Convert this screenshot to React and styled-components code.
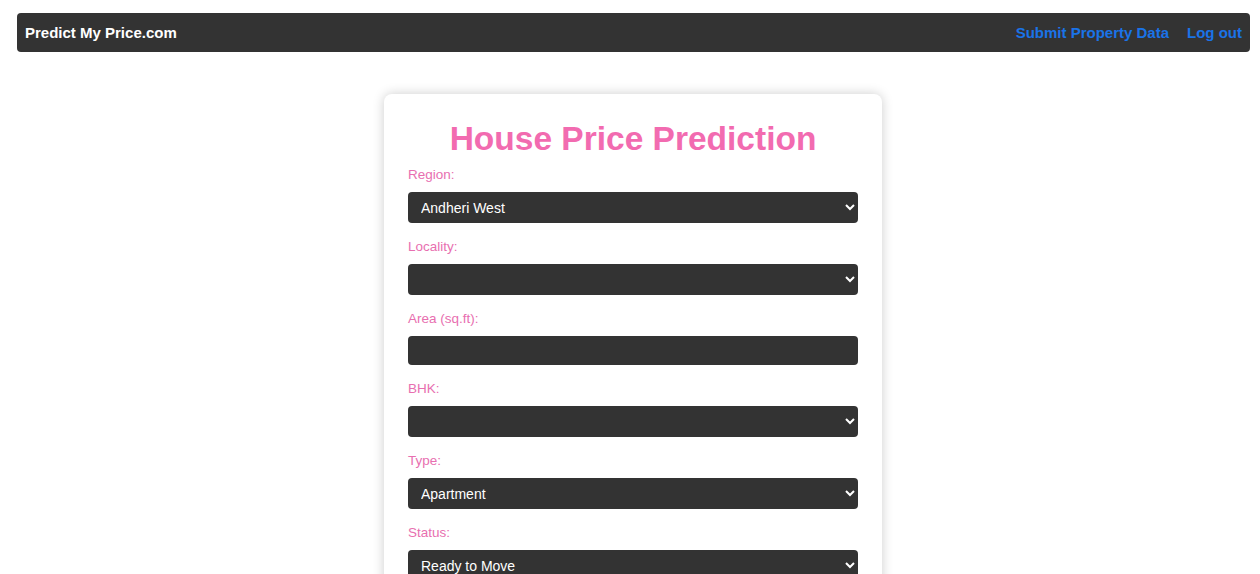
import styled, { createGlobalStyle } from 'styled-components';

const GlobalStyle = createGlobalStyle`
  body {
    margin: 0;
    background: #ffffff;
    font-family: "Liberation Sans", Arial, sans-serif;
  }
`;

const regions = ['Andheri West', 'Andheri East', 'Bandra West', 'Borivali West'];
const types = ['Apartment', 'Independent House', 'Villa'];
const statuses = ['Ready to Move', 'Under Construction'];

const App = () => {
  return (
    <Page>
      <GlobalStyle />
      <NavBar>
        <Brand>Predict My Price.com</Brand>
        <NavLinks>
          <NavLink href="#">Submit Property Data</NavLink>
          <NavLink href="#">Log out</NavLink>
        </NavLinks>
      </NavBar>
      <Card>
        <Title>House Price Prediction</Title>
        <Label>Region:</Label>
        <Select defaultValue="Andheri West">
          {regions.map(r => <option key={r}>{r}</option>)}
        </Select>
        <Label>Locality:</Label>
        <Select defaultValue="">
          <option value=""></option>
        </Select>
        <Label>Area (sq.ft):</Label>
        <Input type="number" />
        <Label>BHK:</Label>
        <Select defaultValue="">
          <option value=""></option>
          <option>1</option>
          <option>2</option>
          <option>3</option>
        </Select>
        <Label>Type:</Label>
        <Select defaultValue="Apartment">
          {types.map(t => <option key={t}>{t}</option>)}
        </Select>
        <Label>Status:</Label>
        <Select defaultValue="Ready to Move">
          {statuses.map(s => <option key={s}>{s}</option>)}
        </Select>
      </Card>
    </Page>
  );
};

const Page = styled.div`
  padding: 13px 10px 40px 17px;
`;

const NavBar = styled.nav`
  display: flex;
  align-items: center;
  justify-content: space-between;
  height: 39px;
  padding: 0 8px;
  background-color: #333333;
  border-radius: 4px;
`;

const Brand = styled.div`
  color: #ffffff;
  font-weight: bold;
  font-size: 15px;
`;

const NavLinks = styled.div`
  display: flex;
  gap: 18px;
`;

const NavLink = styled.a`
  color: #1a73e8;
  font-weight: bold;
  font-size: 15px;
  text-decoration: none;
`;

const Card = styled.div`
  width: 498px;
  box-sizing: border-box;
  margin: 42px 0 0 367px;
  padding: 20px 24px;
  background: #ffffff;
  border-radius: 8px;
  box-shadow: 0 0 12px rgba(0, 0, 0, 0.2);
`;

const Title = styled.h1`
  margin: 6px 0 9px;
  text-align: center;
  color: #f26bb0;
  font-size: 33.5px;
  font-weight: bold;
`;

const Label = styled.label`
  display: block;
  margin-bottom: 10px;
  color: #e86fb0;
  font-size: 13.5px;
  line-height: 15px;
`;

const Select = styled.select`
  display: block;
  width: 100%;
  height: 31px;
  margin-bottom: 16px;
  padding: 0 9px;
  background-color: #333333;
  color: #ffffff;
  border: none;
  border-radius: 4px;
  font-family: "Liberation Sans", Arial, sans-serif;
  font-size: 14px;
`;

const Input = styled.input`
  display: block;
  width: 100%;
  box-sizing: border-box;
  height: 29px;
  margin-bottom: 16px;
  padding: 0 12px;
  background-color: #333333;
  color: #ffffff;
  border: none;
  border-radius: 4px;
  font-size: 14px;
`;

export default App;
